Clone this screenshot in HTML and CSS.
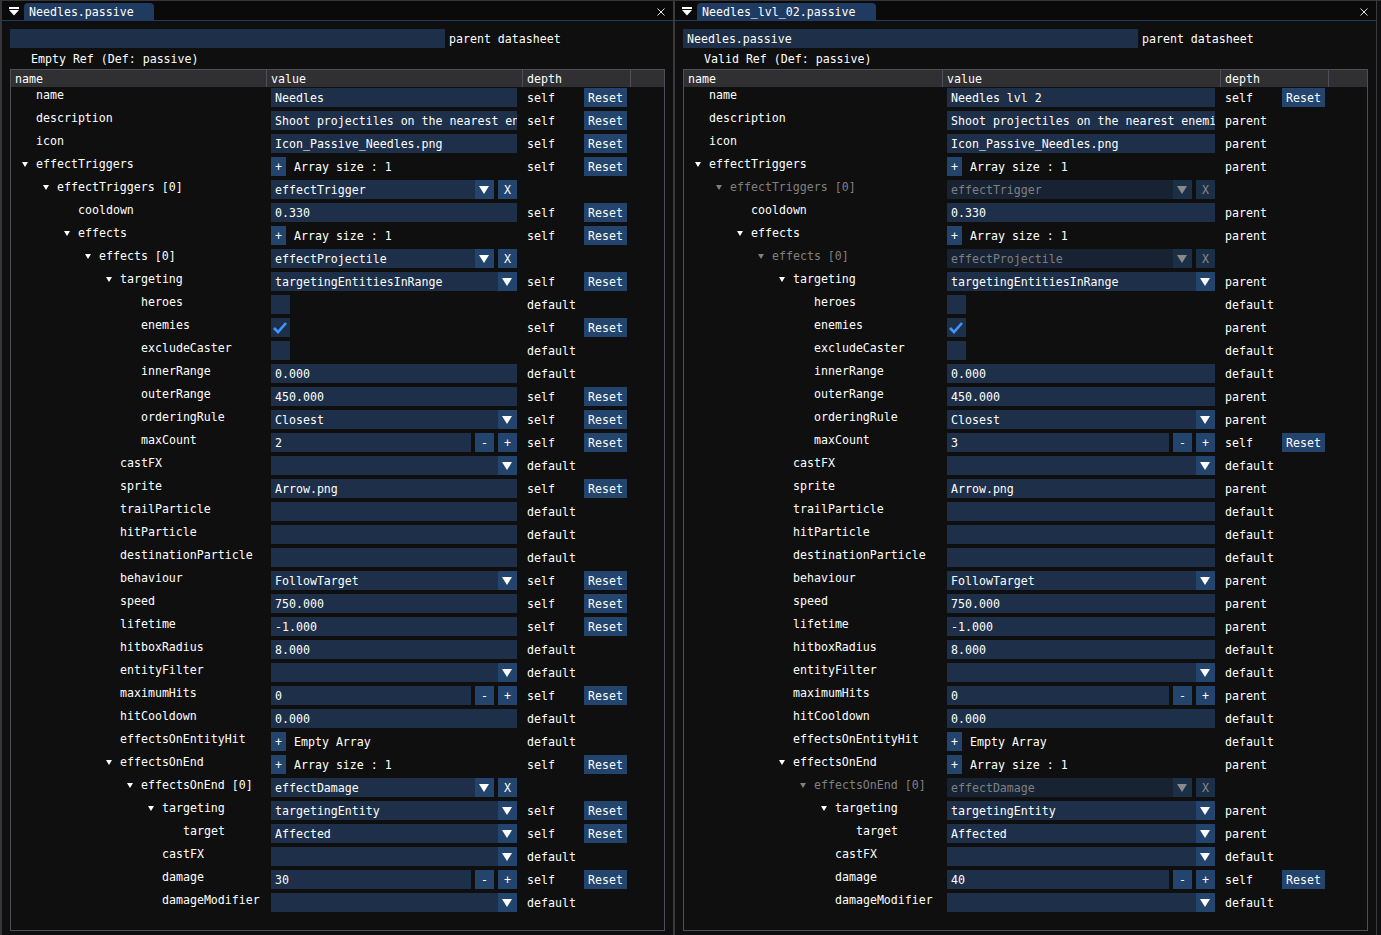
FILE: index.html
```html
<!DOCTYPE html>
<html>
<head>
<meta charset="utf-8">
<title>Datasheet editor</title>
<link rel="stylesheet" href="styles.css">
</head>
<body>
<div class="app">
  <section class="win wl">
    <div class="title">
      <span class="menu"><svg width="10" height="9" viewBox="0 0 10 9"><rect x="0" y="0" width="10" height="2" fill="#fff"/><polygon points="0,3 10,3 5,8.5" fill="#fff"/></svg></span>
      <div class="tab">Needles.passive</div>
      <span class="close"><svg width="8" height="8" viewBox="0 0 8 8"><path d="M0.5 0.5 L7.5 7.5 M7.5 0.5 L0.5 7.5" stroke="#e6e6e6" stroke-width="1"/></svg></span>
    </div>
    <div class="content">
      <div class="ref"><div class="fr refin"></div><span>parent datasheet</span></div>
      <div class="status">Empty Ref (Def: passive)</div>
      <div class="table">
        <div class="row hd"><div class="th">name</div><div class="th">value</div><div class="th">depth</div><div class="th"></div></div>
        <div class="row"><div class="nm l0"><i class="sp"></i>name</div><div class="vl"><div class="fr">Needles</div></div><div class="dp"><span class="dt">self</span><b class="btn rs">Reset</b></div></div>
        <div class="row"><div class="nm l0"><i class="sp"></i>description</div><div class="vl"><div class="fr">Shoot projectiles on the nearest enemies</div></div><div class="dp"><span class="dt">self</span><b class="btn rs">Reset</b></div></div>
        <div class="row"><div class="nm l0"><i class="sp"></i>icon</div><div class="vl"><div class="fr">Icon_Passive_Needles.png</div></div><div class="dp"><span class="dt">self</span><b class="btn rs">Reset</b></div></div>
        <div class="row"><div class="nm l0"><i class="tw"></i>effectTriggers</div><div class="vl"><div class="arr"><b class="btn pl">+</b><span>Array size : 1</span></div></div><div class="dp"><span class="dt">self</span><b class="btn rs">Reset</b></div></div>
        <div class="row"><div class="nm l1"><i class="tw"></i>effectTriggers [0]</div><div class="vl"><div class="hz"><div class="fr cmb"><span>effectTrigger</span><b class="ab"></b></div><b class="btn sq">X</b></div></div><div class="dp"></div></div>
        <div class="row"><div class="nm l2"><i class="sp"></i>cooldown</div><div class="vl"><div class="fr">0.330</div></div><div class="dp"><span class="dt">self</span><b class="btn rs">Reset</b></div></div>
        <div class="row"><div class="nm l2"><i class="tw"></i>effects</div><div class="vl"><div class="arr"><b class="btn pl">+</b><span>Array size : 1</span></div></div><div class="dp"><span class="dt">self</span><b class="btn rs">Reset</b></div></div>
        <div class="row"><div class="nm l3"><i class="tw"></i>effects [0]</div><div class="vl"><div class="hz"><div class="fr cmb"><span>effectProjectile</span><b class="ab"></b></div><b class="btn sq">X</b></div></div><div class="dp"></div></div>
        <div class="row"><div class="nm l4"><i class="tw"></i>targeting</div><div class="vl"><div class="fr cmb"><span>targetingEntitiesInRange</span><b class="ab"></b></div></div><div class="dp"><span class="dt">self</span><b class="btn rs">Reset</b></div></div>
        <div class="row"><div class="nm l5"><i class="sp"></i>heroes</div><div class="vl"><div class="fr chk"></div></div><div class="dp"><span class="dt">default</span></div></div>
        <div class="row"><div class="nm l5"><i class="sp"></i>enemies</div><div class="vl"><div class="fr chk"><svg width="19" height="19" viewBox="0 0 19 19"><polyline points="3,10 7,14 15,5" fill="none" stroke="#4296fa" stroke-width="2.6"/></svg></div></div><div class="dp"><span class="dt">self</span><b class="btn rs">Reset</b></div></div>
        <div class="row"><div class="nm l5"><i class="sp"></i>excludeCaster</div><div class="vl"><div class="fr chk"></div></div><div class="dp"><span class="dt">default</span></div></div>
        <div class="row"><div class="nm l5"><i class="sp"></i>innerRange</div><div class="vl"><div class="fr">0.000</div></div><div class="dp"><span class="dt">default</span></div></div>
        <div class="row"><div class="nm l5"><i class="sp"></i>outerRange</div><div class="vl"><div class="fr">450.000</div></div><div class="dp"><span class="dt">self</span><b class="btn rs">Reset</b></div></div>
        <div class="row"><div class="nm l5"><i class="sp"></i>orderingRule</div><div class="vl"><div class="fr cmb"><span>Closest</span><b class="ab"></b></div></div><div class="dp"><span class="dt">self</span><b class="btn rs">Reset</b></div></div>
        <div class="row"><div class="nm l5"><i class="sp"></i>maxCount</div><div class="vl"><div class="hz"><div class="fr grow">2</div><b class="btn sq">-</b><b class="btn sq">+</b></div></div><div class="dp"><span class="dt">self</span><b class="btn rs">Reset</b></div></div>
        <div class="row"><div class="nm l4"><i class="sp"></i>castFX</div><div class="vl"><div class="fr cmb"><span></span><b class="ab"></b></div></div><div class="dp"><span class="dt">default</span></div></div>
        <div class="row"><div class="nm l4"><i class="sp"></i>sprite</div><div class="vl"><div class="fr">Arrow.png</div></div><div class="dp"><span class="dt">self</span><b class="btn rs">Reset</b></div></div>
        <div class="row"><div class="nm l4"><i class="sp"></i>trailParticle</div><div class="vl"><div class="fr"></div></div><div class="dp"><span class="dt">default</span></div></div>
        <div class="row"><div class="nm l4"><i class="sp"></i>hitParticle</div><div class="vl"><div class="fr"></div></div><div class="dp"><span class="dt">default</span></div></div>
        <div class="row"><div class="nm l4"><i class="sp"></i>destinationParticle</div><div class="vl"><div class="fr"></div></div><div class="dp"><span class="dt">default</span></div></div>
        <div class="row"><div class="nm l4"><i class="sp"></i>behaviour</div><div class="vl"><div class="fr cmb"><span>FollowTarget</span><b class="ab"></b></div></div><div class="dp"><span class="dt">self</span><b class="btn rs">Reset</b></div></div>
        <div class="row"><div class="nm l4"><i class="sp"></i>speed</div><div class="vl"><div class="fr">750.000</div></div><div class="dp"><span class="dt">self</span><b class="btn rs">Reset</b></div></div>
        <div class="row"><div class="nm l4"><i class="sp"></i>lifetime</div><div class="vl"><div class="fr">-1.000</div></div><div class="dp"><span class="dt">self</span><b class="btn rs">Reset</b></div></div>
        <div class="row"><div class="nm l4"><i class="sp"></i>hitboxRadius</div><div class="vl"><div class="fr">8.000</div></div><div class="dp"><span class="dt">default</span></div></div>
        <div class="row"><div class="nm l4"><i class="sp"></i>entityFilter</div><div class="vl"><div class="fr cmb"><span></span><b class="ab"></b></div></div><div class="dp"><span class="dt">default</span></div></div>
        <div class="row"><div class="nm l4"><i class="sp"></i>maximumHits</div><div class="vl"><div class="hz"><div class="fr grow">0</div><b class="btn sq">-</b><b class="btn sq">+</b></div></div><div class="dp"><span class="dt">self</span><b class="btn rs">Reset</b></div></div>
        <div class="row"><div class="nm l4"><i class="sp"></i>hitCooldown</div><div class="vl"><div class="fr">0.000</div></div><div class="dp"><span class="dt">default</span></div></div>
        <div class="row"><div class="nm l4"><i class="sp"></i>effectsOnEntityHit</div><div class="vl"><div class="arr"><b class="btn pl">+</b><span>Empty Array</span></div></div><div class="dp"><span class="dt">default</span></div></div>
        <div class="row"><div class="nm l4"><i class="tw"></i>effectsOnEnd</div><div class="vl"><div class="arr"><b class="btn pl">+</b><span>Array size : 1</span></div></div><div class="dp"><span class="dt">self</span><b class="btn rs">Reset</b></div></div>
        <div class="row"><div class="nm l5"><i class="tw"></i>effectsOnEnd [0]</div><div class="vl"><div class="hz"><div class="fr cmb"><span>effectDamage</span><b class="ab"></b></div><b class="btn sq">X</b></div></div><div class="dp"></div></div>
        <div class="row"><div class="nm l6"><i class="tw"></i>targeting</div><div class="vl"><div class="fr cmb"><span>targetingEntity</span><b class="ab"></b></div></div><div class="dp"><span class="dt">self</span><b class="btn rs">Reset</b></div></div>
        <div class="row"><div class="nm l7"><i class="sp"></i>target</div><div class="vl"><div class="fr cmb"><span>Affected</span><b class="ab"></b></div></div><div class="dp"><span class="dt">self</span><b class="btn rs">Reset</b></div></div>
        <div class="row"><div class="nm l6"><i class="sp"></i>castFX</div><div class="vl"><div class="fr cmb"><span></span><b class="ab"></b></div></div><div class="dp"><span class="dt">default</span></div></div>
        <div class="row"><div class="nm l6"><i class="sp"></i>damage</div><div class="vl"><div class="hz"><div class="fr grow">30</div><b class="btn sq">-</b><b class="btn sq">+</b></div></div><div class="dp"><span class="dt">self</span><b class="btn rs">Reset</b></div></div>
        <div class="row"><div class="nm l6"><i class="sp"></i>damageModifier</div><div class="vl"><div class="fr cmb"><span></span><b class="ab"></b></div></div><div class="dp"><span class="dt">default</span></div></div>
      </div>
    </div>
  </section>
  <div class="split"></div>
  <section class="win wr">
    <div class="title">
      <span class="menu"><svg width="10" height="9" viewBox="0 0 10 9"><rect x="0" y="0" width="10" height="2" fill="#fff"/><polygon points="0,3 10,3 5,8.5" fill="#fff"/></svg></span>
      <div class="tab">Needles_lvl_02.passive</div>
      <span class="close"><svg width="8" height="8" viewBox="0 0 8 8"><path d="M0.5 0.5 L7.5 7.5 M7.5 0.5 L0.5 7.5" stroke="#e6e6e6" stroke-width="1"/></svg></span>
    </div>
    <div class="content">
      <div class="ref"><div class="fr refin">Needles.passive</div><span>parent datasheet</span></div>
      <div class="status">Valid Ref (Def: passive)</div>
      <div class="table">
        <div class="row hd"><div class="th">name</div><div class="th">value</div><div class="th">depth</div><div class="th"></div></div>
        <div class="row"><div class="nm l0"><i class="sp"></i>name</div><div class="vl"><div class="fr">Needles lvl 2</div></div><div class="dp"><span class="dt">self</span><b class="btn rs">Reset</b></div></div>
        <div class="row"><div class="nm l0"><i class="sp"></i>description</div><div class="vl"><div class="fr">Shoot projectiles on the nearest enemies</div></div><div class="dp"><span class="dt">parent</span></div></div>
        <div class="row"><div class="nm l0"><i class="sp"></i>icon</div><div class="vl"><div class="fr">Icon_Passive_Needles.png</div></div><div class="dp"><span class="dt">parent</span></div></div>
        <div class="row"><div class="nm l0"><i class="tw"></i>effectTriggers</div><div class="vl"><div class="arr"><b class="btn pl">+</b><span>Array size : 1</span></div></div><div class="dp"><span class="dt">parent</span></div></div>
        <div class="row"><div class="nm l1 dim"><i class="tw"></i>effectTriggers [0]</div><div class="vl dis"><div class="hz"><div class="fr cmb"><span>effectTrigger</span><b class="ab"></b></div><b class="btn sq">X</b></div></div><div class="dp"></div></div>
        <div class="row"><div class="nm l2"><i class="sp"></i>cooldown</div><div class="vl"><div class="fr">0.330</div></div><div class="dp"><span class="dt">parent</span></div></div>
        <div class="row"><div class="nm l2"><i class="tw"></i>effects</div><div class="vl"><div class="arr"><b class="btn pl">+</b><span>Array size : 1</span></div></div><div class="dp"><span class="dt">parent</span></div></div>
        <div class="row"><div class="nm l3 dim"><i class="tw"></i>effects [0]</div><div class="vl dis"><div class="hz"><div class="fr cmb"><span>effectProjectile</span><b class="ab"></b></div><b class="btn sq">X</b></div></div><div class="dp"></div></div>
        <div class="row"><div class="nm l4"><i class="tw"></i>targeting</div><div class="vl"><div class="fr cmb"><span>targetingEntitiesInRange</span><b class="ab"></b></div></div><div class="dp"><span class="dt">parent</span></div></div>
        <div class="row"><div class="nm l5"><i class="sp"></i>heroes</div><div class="vl"><div class="fr chk"></div></div><div class="dp"><span class="dt">default</span></div></div>
        <div class="row"><div class="nm l5"><i class="sp"></i>enemies</div><div class="vl"><div class="fr chk"><svg width="19" height="19" viewBox="0 0 19 19"><polyline points="3,10 7,14 15,5" fill="none" stroke="#4296fa" stroke-width="2.6"/></svg></div></div><div class="dp"><span class="dt">parent</span></div></div>
        <div class="row"><div class="nm l5"><i class="sp"></i>excludeCaster</div><div class="vl"><div class="fr chk"></div></div><div class="dp"><span class="dt">default</span></div></div>
        <div class="row"><div class="nm l5"><i class="sp"></i>innerRange</div><div class="vl"><div class="fr">0.000</div></div><div class="dp"><span class="dt">default</span></div></div>
        <div class="row"><div class="nm l5"><i class="sp"></i>outerRange</div><div class="vl"><div class="fr">450.000</div></div><div class="dp"><span class="dt">parent</span></div></div>
        <div class="row"><div class="nm l5"><i class="sp"></i>orderingRule</div><div class="vl"><div class="fr cmb"><span>Closest</span><b class="ab"></b></div></div><div class="dp"><span class="dt">parent</span></div></div>
        <div class="row"><div class="nm l5"><i class="sp"></i>maxCount</div><div class="vl"><div class="hz"><div class="fr grow">3</div><b class="btn sq">-</b><b class="btn sq">+</b></div></div><div class="dp"><span class="dt">self</span><b class="btn rs">Reset</b></div></div>
        <div class="row"><div class="nm l4"><i class="sp"></i>castFX</div><div class="vl"><div class="fr cmb"><span></span><b class="ab"></b></div></div><div class="dp"><span class="dt">default</span></div></div>
        <div class="row"><div class="nm l4"><i class="sp"></i>sprite</div><div class="vl"><div class="fr">Arrow.png</div></div><div class="dp"><span class="dt">parent</span></div></div>
        <div class="row"><div class="nm l4"><i class="sp"></i>trailParticle</div><div class="vl"><div class="fr"></div></div><div class="dp"><span class="dt">default</span></div></div>
        <div class="row"><div class="nm l4"><i class="sp"></i>hitParticle</div><div class="vl"><div class="fr"></div></div><div class="dp"><span class="dt">default</span></div></div>
        <div class="row"><div class="nm l4"><i class="sp"></i>destinationParticle</div><div class="vl"><div class="fr"></div></div><div class="dp"><span class="dt">default</span></div></div>
        <div class="row"><div class="nm l4"><i class="sp"></i>behaviour</div><div class="vl"><div class="fr cmb"><span>FollowTarget</span><b class="ab"></b></div></div><div class="dp"><span class="dt">parent</span></div></div>
        <div class="row"><div class="nm l4"><i class="sp"></i>speed</div><div class="vl"><div class="fr">750.000</div></div><div class="dp"><span class="dt">parent</span></div></div>
        <div class="row"><div class="nm l4"><i class="sp"></i>lifetime</div><div class="vl"><div class="fr">-1.000</div></div><div class="dp"><span class="dt">parent</span></div></div>
        <div class="row"><div class="nm l4"><i class="sp"></i>hitboxRadius</div><div class="vl"><div class="fr">8.000</div></div><div class="dp"><span class="dt">default</span></div></div>
        <div class="row"><div class="nm l4"><i class="sp"></i>entityFilter</div><div class="vl"><div class="fr cmb"><span></span><b class="ab"></b></div></div><div class="dp"><span class="dt">default</span></div></div>
        <div class="row"><div class="nm l4"><i class="sp"></i>maximumHits</div><div class="vl"><div class="hz"><div class="fr grow">0</div><b class="btn sq">-</b><b class="btn sq">+</b></div></div><div class="dp"><span class="dt">parent</span></div></div>
        <div class="row"><div class="nm l4"><i class="sp"></i>hitCooldown</div><div class="vl"><div class="fr">0.000</div></div><div class="dp"><span class="dt">default</span></div></div>
        <div class="row"><div class="nm l4"><i class="sp"></i>effectsOnEntityHit</div><div class="vl"><div class="arr"><b class="btn pl">+</b><span>Empty Array</span></div></div><div class="dp"><span class="dt">default</span></div></div>
        <div class="row"><div class="nm l4"><i class="tw"></i>effectsOnEnd</div><div class="vl"><div class="arr"><b class="btn pl">+</b><span>Array size : 1</span></div></div><div class="dp"><span class="dt">parent</span></div></div>
        <div class="row"><div class="nm l5 dim"><i class="tw"></i>effectsOnEnd [0]</div><div class="vl dis"><div class="hz"><div class="fr cmb"><span>effectDamage</span><b class="ab"></b></div><b class="btn sq">X</b></div></div><div class="dp"></div></div>
        <div class="row"><div class="nm l6"><i class="tw"></i>targeting</div><div class="vl"><div class="fr cmb"><span>targetingEntity</span><b class="ab"></b></div></div><div class="dp"><span class="dt">parent</span></div></div>
        <div class="row"><div class="nm l7"><i class="sp"></i>target</div><div class="vl"><div class="fr cmb"><span>Affected</span><b class="ab"></b></div></div><div class="dp"><span class="dt">parent</span></div></div>
        <div class="row"><div class="nm l6"><i class="sp"></i>castFX</div><div class="vl"><div class="fr cmb"><span></span><b class="ab"></b></div></div><div class="dp"><span class="dt">default</span></div></div>
        <div class="row"><div class="nm l6"><i class="sp"></i>damage</div><div class="vl"><div class="hz"><div class="fr grow">40</div><b class="btn sq">-</b><b class="btn sq">+</b></div></div><div class="dp"><span class="dt">self</span><b class="btn rs">Reset</b></div></div>
        <div class="row"><div class="nm l6"><i class="sp"></i>damageModifier</div><div class="vl"><div class="fr cmb"><span></span><b class="ab"></b></div></div><div class="dp"><span class="dt">default</span></div></div>
      </div>
    </div>
  </section>
</div>
</body>
</html>
```
FILE: styles.css
```css
* { box-sizing: border-box; margin: 0; padding: 0; }
html, body { background: #0f0f0f; }
body {
  width: 1381px;
  height: 935px;
  overflow: hidden;
  font-family: "DejaVu Sans Mono", "Liberation Mono", monospace;
  font-size: 11.6px;
  line-height: 13px;
  color: #ffffff;
}
b, i { font-weight: normal; font-style: normal; }

.app {
  display: flex;
  height: 935px;
  border-top: 1px solid #35353a;
}
.win {
  display: flex;
  flex-direction: column;
  background: #0f0f0f;
  height: 934px;
}
.wl { width: 673px; border-left: 2px solid #35353a; }
.split { width: 2px; background: #3a3a40; }
.wr { width: 702px; border-right: 1px solid #3a3a40; }

/* title bar */
.title {
  height: 20px;
  background: #0a0a0a;
  border-bottom: 1px solid #1f3b61;
  display: flex;
  align-items: center;
}
.menu { display: flex; margin-left: 7px; width: 10px; height: 9px; margin-top: 2px; }
.tab {
  align-self: flex-end;
  margin-left: 5px;
  height: 17px;
  line-height: 16px;
  padding: 1px 20px 0 5px;
  background: #1f3b61;
  border-radius: 4px 4px 0 0;
  white-space: pre;
}
.close { display: flex; margin-left: auto; margin-right: 8px; margin-top: 2px; }

/* content */
.content { padding: 8px 8px 0 8px; display: flex; flex-direction: column; }
.ref { display: flex; align-items: center; gap: 4px; height: 19px; }
.ref > span { padding-top: 2px; white-space: pre; }
.wl .refin { width: 435px; }
.wr .refin { width: 455px; }
.status { margin-top: 4px; padding: 1px 0 0 21px; height: 13px; white-space: pre; }

.table {
  margin-top: 4px;
  border: 1px solid #4f4f59;
  height: 862px;
  overflow: hidden;
}
.row { display: grid; height: 23px; padding-top: 1px; }
.wl .row { grid-template-columns: 256px 256px 108px 33px; }
.wr .row { grid-template-columns: 259px 278px 108px 38px; }
.row.hd {
  height: 17px;
  padding-top: 0;
  background: #303033;
}
.th {
  height: 17px;
  line-height: 16px;
  padding: 1px 0 0 4px;
  border-right: 1px solid #4f4f59;
  white-space: pre;
}
.th:last-child { border-right: none; }

/* name column */
.nm { white-space: pre; overflow: hidden; line-height: 13px; padding-top: 1px; display: flex; align-items: flex-start; }
.l0 { padding-left: 11px; }
.l1 { padding-left: 32px; }
.l2 { padding-left: 53px; }
.l3 { padding-left: 74px; }
.l4 { padding-left: 95px; }
.l5 { padding-left: 116px; }
.l6 { padding-left: 137px; }
.l7 { padding-left: 158px; }
.sp, .tw { display: inline-block; width: 14px; height: 13px; flex: none; position: relative; }
.tw::before {
  content: "";
  position: absolute;
  left: 0;
  top: 4px;
  border-left: 3px solid transparent;
  border-right: 3px solid transparent;
  border-top: 5px solid #ffffff;
}
.nm.dim { color: #808080; }
.nm.dim .tw::before { border-top-color: #808080; }

/* value column */
.vl { padding: 0 6px 0 4px; min-width: 0; }
.fr {
  height: 19px;
  line-height: 17px;
  padding: 2px 4px 0 4px;
  background: #1d2f49;
  white-space: pre;
  overflow: hidden;
}
.chk { width: 19px; padding: 0; display: flex; }
.cmb { display: flex; padding-right: 0; padding-top: 0; }
.cmb span { flex: 1; overflow: hidden; white-space: pre; line-height: 17px; padding-top: 2px; }
.ab {
  width: 19px;
  height: 19px;
  flex: none;
  background: #23446c;
  position: relative;
}
.ab::after {
  content: "";
  position: absolute;
  left: 4px;
  top: 6px;
  border-left: 5px solid transparent;
  border-right: 5px solid transparent;
  border-top: 8px solid #ffffff;
}
.hz { display: flex; gap: 4px; }
.hz .cmb, .hz .grow { flex: 1; min-width: 0; }
.arr { display: flex; gap: 8px; align-items: center; height: 19px; white-space: pre; }
.arr > span { padding-top: 2px; }

.btn {
  display: inline-flex;
  align-items: center;
  justify-content: center;
  height: 19px;
  background: #23446c;
  padding: 2px 4px 0 4px;
  flex: none;
  white-space: pre;
}
.btn.sq { width: 19px; padding: 2px 0 0 0; }
.btn.pl { width: 15px; padding: 2px 0 0 0; }
.btn.rs { width: 43px; padding: 2px 0 0 0; }

.dis .fr { background: #172232; color: #808080; }
.dis .ab, .dis .btn { background: #1b2f47; color: #8a8a8a; }
.dis .ab::after { border-top-color: #8a8a8a; }

/* depth column */
.dp { display: flex; align-items: center; height: 19px; padding-left: 4px; white-space: pre; }
.dt { width: 57px; flex: none; padding-top: 2px; }
```
